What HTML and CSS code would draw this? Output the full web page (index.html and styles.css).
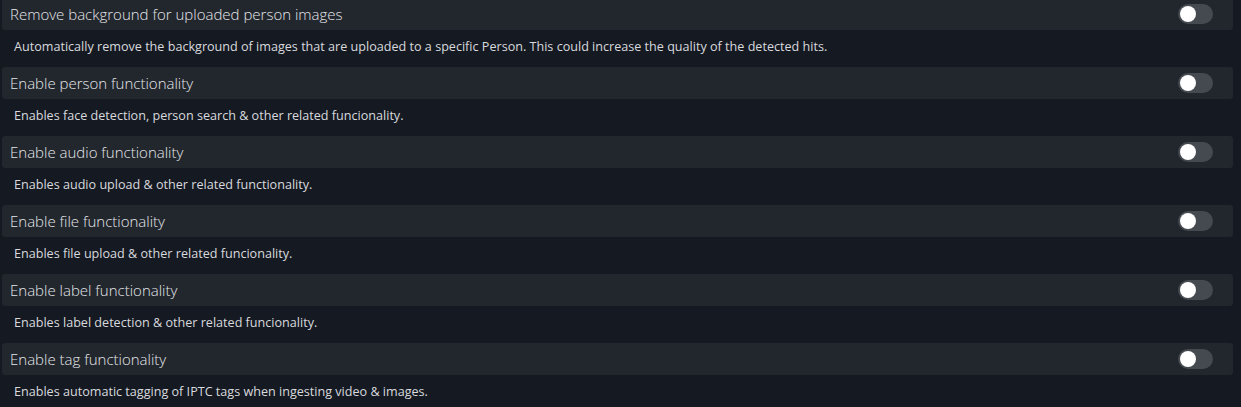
FILE: index.html
```html
<!DOCTYPE html>
<html>
<head>
<meta charset="utf-8">
<link rel="stylesheet" href="styles.css">
</head>
<body>
<div class="settings">
  <div class="item">
    <div class="header"><span class="title">Remove background for uploaded person images</span><span class="toggle"><span class="knob"></span></span></div>
    <div class="desc">Automatically remove the background of images that are uploaded to a specific Person. This could increase the quality of the detected hits.</div>
  </div>
  <div class="item">
    <div class="header"><span class="title">Enable person functionality</span><span class="toggle"><span class="knob"></span></span></div>
    <div class="desc">Enables face detection, person search &amp; other related funcionality.</div>
  </div>
  <div class="item">
    <div class="header"><span class="title">Enable audio functionality</span><span class="toggle"><span class="knob"></span></span></div>
    <div class="desc">Enables audio upload &amp; other related functionality.</div>
  </div>
  <div class="item">
    <div class="header"><span class="title">Enable file functionality</span><span class="toggle"><span class="knob"></span></span></div>
    <div class="desc">Enables file upload &amp; other related funcionality.</div>
  </div>
  <div class="item">
    <div class="header"><span class="title">Enable label functionality</span><span class="toggle"><span class="knob"></span></span></div>
    <div class="desc">Enables label detection &amp; other related funcionality.</div>
  </div>
  <div class="item">
    <div class="header"><span class="title">Enable tag functionality</span><span class="toggle"><span class="knob"></span></span></div>
    <div class="desc">Enables automatic tagging of IPTC tags when ingesting video &amp; images.</div>
  </div>
</div>
</body>
</html>
```

FILE: styles.css
```css
html, body {
  margin: 0;
  padding: 0;
  background: #151922;
  height: 100%;
  overflow: hidden;
}
body {
  font-family: "Open Sans", "Noto Sans", sans-serif;
  color: #e2e4e8;
}
.settings {
  display: flex;
  flex-direction: column;
  margin-top: -2px;
  padding: 0 8px 0 2px;
}
.item {
  display: flex;
  flex-direction: column;
}
.header {
  height: 32px;
  background: #22262d;
  border-radius: 3px;
  display: flex;
  align-items: center;
  justify-content: space-between;
  padding: 0 20px 0 8px;
}
.title {
  font-size: 15px;
  font-weight: 300;
  color: #e4e6ea;
}
.desc {
  height: 37px;
  display: flex;
  align-items: center;
  padding-left: 12px;
  padding-bottom: 4px;
  box-sizing: border-box;
  font-size: 12.6px;
  color: #d8dade;
}
.toggle {
  width: 35px;
  height: 20px;
  border-radius: 10px;
  background: #454950;
  display: flex;
  align-items: center;
  padding-left: 2px;
  box-sizing: border-box;
}
.knob {
  width: 16px;
  height: 16px;
  border-radius: 50%;
  background: #ffffff;
}
```
